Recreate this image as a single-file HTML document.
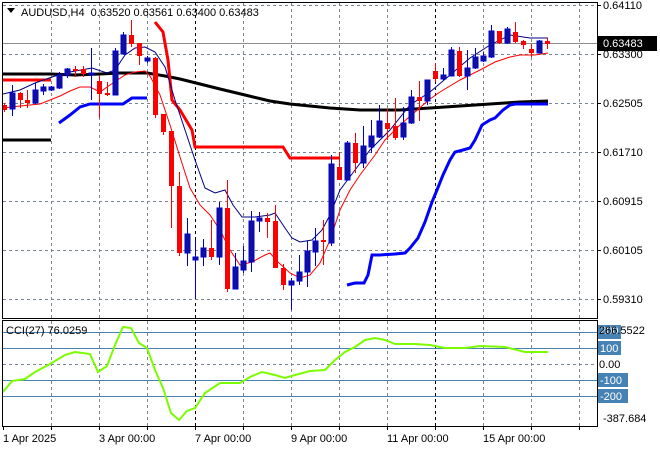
<!DOCTYPE html>
<html><head><meta charset="utf-8">
<style>
html,body{margin:0;padding:0;background:#fff;}
body{width:660px;height:450px;overflow:hidden;}
svg{display:block;font-family:"Liberation Sans","DejaVu Sans",sans-serif;}
</style></head>
<body>
<svg id="c" width="660" height="450" viewBox="0 0 660 450" xmlns="http://www.w3.org/2000/svg"></svg>
<script>
var s='';
function L(x1,y1,x2,y2,st){s+='<line x1="'+x1+'" y1="'+y1+'" x2="'+x2+'" y2="'+y2+'" '+st+'/>';}
function P(pts,st){s+='<polyline fill="none" points="'+pts.map(function(p){return p.join(',')}).join(' ')+'" '+st+'/>';}
function T(x,y,t,st){s+='<text x="'+x+'" y="'+y+'" '+(st||'')+'>'+t+'</text>';}
var gx=[51,99,147,243,291,339,387,483,531,579];
var gy=[5,54,103,152,201,250,299];
var g='stroke="#7a8594" stroke-width="1" stroke-dasharray="3,3"';
gx.forEach(function(x){L(x+.5,3,x+.5,318,g);L(x+.5,321,x+.5,426,g);});
[195,435].forEach(function(x){L(x+.5,3,x+.5,318,'stroke="#000" stroke-dasharray="3,3"');L(x+.5,321,x+.5,426,'stroke="#000" stroke-dasharray="3,3"');});
gy.forEach(function(y){L(3,y+.5,597,y+.5,g);});
// CCI levels
[332,348,380,396].forEach(function(y){L(3,y+.5,597,y+.5,'stroke="#4682b4"');});
L(3,364.5,597,364.5,g);
// price line
L(3,43.5,597,43.5,'stroke="#8c8c8c"');
// black MA
P([[3,74],[51,74],[75,75],[100,74],[120,73],[147,73],[165,76],[180,79],[200,84],[220,89],[245,95],[270,101],[290,104],[310,106],[330,108],[360,110],[400,110],[430,108],[460,106],[490,104],[520,102],[548,101]],'stroke="#000" stroke-width="3"');
L(3,140,51,140,'stroke="#000" stroke-width="3"');
L(3,80,51,80,'stroke="#f00" stroke-width="3"');
// red step
P([[155,22],[163,32],[168,60],[172,100],[180,110],[186,120],[192,130],[195,147],[283,147],[290,158],[339,158]],'stroke="#f00" stroke-width="3"');
// blue step
P([[59,123],[70,115],[80,107],[90,104],[123,104],[132,98],[147,98]],'stroke="#0000ff" stroke-width="3"');
P([[347,285],[355,283],[364,283],[368,275],[372,255],[380,255],[395,254],[405,253],[410,248],[418,238],[425,222],[432,202],[437,190],[443,175],[450,160],[455,152],[463,150],[470,148],[475,140],[482,125],[490,120],[495,118],[503,110],[510,105],[515,104],[548,104]],'stroke="#0000ff" stroke-width="3"');
// navy MA
P([[3,94],[20,90],[35,83],[55,76],[70,72],[92,68],[107,73],[115,70],[125,55],[135,48],[145,47],[155,52],[165,67],[175,100],[185,130],[195,160],[205,188],[215,193],[225,190],[233,205],[242,217],[255,217],[270,215],[275,213],[285,228],[292,238],[300,242],[312,240],[322,230],[330,215],[340,190],[355,170],[370,150],[390,130],[410,105],[430,92],[450,75],[470,58],[490,45],[510,35],[530,38],[548,38]],'stroke="#000080" stroke-width="1"');
// red MA
P([[3,108],[20,106],[40,104],[60,96],[70,91],[80,87],[90,87],[100,92],[110,85],[125,75],[135,72],[145,71],[150,76],[160,95],[170,125],[180,157],[190,188],[200,205],[210,215],[220,230],[230,250],[240,265],[252,262],[265,255],[270,253],[278,262],[290,273],[300,278],[310,275],[320,263],[330,240],[340,210],[350,190],[360,175],[375,155],[385,140],[400,125],[415,112],[430,99],[440,92],[460,80],[480,70],[495,62],[510,57],[520,55],[535,55],[548,53]],'stroke="#f00" stroke-width="1"');
// candles [x,color,bodyTop,bodyBot,hi,lo]
var C=[[4,'r',105,110,103,112],[12,'b',93,109,85,116],[20,'r',93,100,92,108],[27,'r',100,103,90,108],[35,'b',90,103,83,104],[43,'b',87,91,84,95],[51,'b',87,90,86,91],[59,'b',75,88,72,89],[67,'b',69,75,68,78],[75,'r',69,71,66,77],[83,'r',69,74,66,77],[91,'b',73,75,48,100],[99,'r',81,94,76,118],[107,'r',93,95,82,96],[115,'b',51,95,48,95],[123,'b',35,54,32,54],[131,'r',35,44,20,47],[139,'r',43,56,43,65],[147,'b',58,61,56,63],[155,'r',58,115,57,118],[163,'r',114,132,114,135],[171,'r',131,186,131,228],[179,'r',186,253,172,256],[187,'b',234,253,218,266],[195,'b',257,260,240,299],[203,'b',248,257,239,266],[211,'r',248,257,220,260],[219,'b',208,257,202,265],[227,'r',208,289,180,292],[235,'b',267,289,253,289],[243,'b',261,270,246,273],[251,'b',221,262,211,272],[259,'b',218,221,212,232],[267,'r',218,222,213,238],[275,'r',221,268,205,268],[283,'r',268,285,264,290],[291,'b',281,285,278,310],[299,'b',272,281,255,285],[307,'b',251,272,241,287],[315,'b',241,252,228,266],[323,'r',240,242,220,265],[331,'b',164,243,155,246],[339,'r',167,180,152,180],[347,'b',143,180,141,180],[355,'r',143,163,133,173],[363,'b',146,163,126,168],[371,'b',136,147,120,153],[379,'b',121,137,105,138],[387,'r',123,129,109,140],[395,'r',126,138,98,140],[403,'b',123,137,107,140],[411,'b',97,123,90,124],[419,'r',97,101,81,121],[427,'b',80,101,81,105],[435,'r',71,79,63,82],[443,'b',75,79,68,80],[451,'b',50,76,47,76],[459,'r',51,76,47,77],[467,'b',68,76,50,90],[475,'b',57,68,48,69],[483,'b',56,61,52,62],[491,'b',31,57,25,58],[499,'r',31,43,31,44],[507,'b',29,43,27,44],[515,'r',32,42,22,43],[523,'r',41,45,40,49],[531,'r',49,53,44,57],[539,'b',41,53,40,53],[547,'r',41,44,38,49]];
C.forEach(function(c){var col=c[1]=='r'?'#ff0000':'#0000cc';var x=c[0];
L(x+.5,c[4],x+.5,c[5],'stroke="'+col+'"');
var h=Math.max(c[3]-c[2],2);
s+='<rect x="'+(x-2)+'" y="'+c[2]+'" width="5" height="'+h+'" fill="'+(c[1]=='r'?'#ff0000':'#1010a0')+'" stroke="'+col+'" stroke-width="'+(c[1]=='r'?0:1)+'"/>';});
// CCI
P([[3,392],[12,381],[25,379],[35,372],[50,364],[65,355],[75,352],[90,354],[98,372],[107,366],[115,345],[123,327],[131,328],[139,343],[147,348],[155,370],[163,388],[171,413],[179,420],[187,411],[195,408],[205,393],[220,383],[240,383],[250,377],[262,372],[275,375],[285,378],[295,375],[310,371],[325,370],[335,360],[345,352],[355,347],[365,340],[375,338],[385,340],[395,344],[405,344],[415,344],[430,345],[445,348],[465,348],[480,346],[505,347],[525,352],[535,352],[548,352]],'stroke="#7cfc00" stroke-width="2"');
// frames
s+='<rect x="2.5" y="2.5" width="595" height="316" fill="none" stroke="#000"/>';
s+='<rect x="2.5" y="320.5" width="595" height="106" fill="none" stroke="#000"/>';
// axis ticks
[5,54,103,152,201,250,299].forEach(function(y){L(597,y+.5,601,y+.5,'stroke="#000"');});
[3,51,99,147,195,243,291,339,387,435,483,531,579].forEach(function(x){L(x+.5,426,x+.5,430,'stroke="#000"');});
var ft='font-size="11" fill="#000"';
var pl=[['0.64110',5],['0.63300',54],['0.62505',103],['0.61710',152],['0.60915',201],['0.60105',250],['0.59310',299]];
pl.forEach(function(p){T(603,p[1]+4,p[0],ft);});
s+='<rect x="598" y="36" width="59" height="15" fill="#000"/>';
T(603,47,'0.63483','font-size="11" fill="#fff"');
[['100',348],['-100',380],['-200',396]].forEach(function(p){s+='<rect x="598" y="'+(p[1]-7)+'" width="'+(p[0].length*7+2)+'" height="14" fill="#4682b4"/>';T(600,p[1]+4,p[0],'font-size="11" fill="#fff"');});
s+='<rect x="598" y="325" width="23" height="14" fill="#4682b4"/>';
T(600,334,'200','font-size="11" fill="#fff"');
T(599,334,'266.5522',ft);
T(599,368,'0.00',ft);
T(603,422,'-387.684',ft);
T(6,334,'CCI(27) 76.0259',ft);
s+='<path d="M7 8 L15 8 L11 13 Z" fill="#000"/>';
T(21,16,'AUDUSD,H4&#160;&#160;0.63520 0.63561 0.63400 0.63483',ft);
[['1 Apr 2025',3],['3 Apr 00:00',99],['7 Apr 00:00',195],['9 Apr 00:00',291],['11 Apr 00:00',387],['15 Apr 00:00',483]].forEach(function(p){T(p[1],442,p[0],ft);});
document.getElementById('c').innerHTML=s;
</script>
</body></html>
